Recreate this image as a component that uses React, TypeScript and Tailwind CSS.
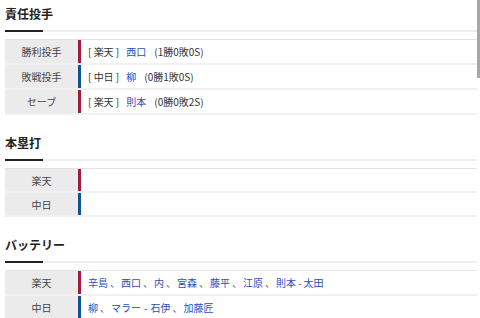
const RED = 'bg-[#a31a3c]';
const BLUE = 'bg-[#12509b]';

type Row = {
  label: string;
  team: 'red' | 'blue';
  content?: React.ReactNode;
};

function Name({ children }: { children: React.ReactNode }) {
  return <span className="text-[#1f4fbf]">{children}</span>;
}

function Sep() {
  return <span className="text-[#555] ml-[2px] mr-[1px]">、</span>;
}

function Heading({ title, first }: { title: string; first?: boolean }) {
  return (
    <div className={first ? '' : 'mt-[14px]'}>
      <h2 className="text-[12px] font-bold leading-[16px] text-[#222] pt-[6px] pb-[8px]">{title}</h2>
      <div className="flex h-[2px]">
        <div className="w-[38px] bg-[#222]" />
        <div className="flex-1 bg-[#eeeeee]" />
      </div>
    </div>
  );
}

function Table({ rows }: { rows: Row[] }) {
  return (
    <div className="mt-[7px] border-t border-[#e3e3e3]">
      {rows.map((r, i) => (
        <div key={i} className={`flex border-b-2 border-[#f1f1f1] ${r.content ? 'h-[25px]' : 'h-[24px]'}`}>
          <div className="w-[73px] bg-[#ebebeb] flex items-center justify-center text-[10px] text-[#444]">
            {r.label}
          </div>
          <div className={`w-[3px] ${r.team === 'red' ? RED : BLUE}`} />
          <div className="flex-1 flex items-center pl-[7px] text-[10px] text-[#333] whitespace-nowrap">
            {r.content}
          </div>
        </div>
      ))}
    </div>
  );
}

function Pitcher({ team, name, record }: { team: string; name: string; record: string }) {
  return (
    <>
      <span className="mr-[7px]">[ {team} ]</span>
      <Name>{name}</Name>
      <span className="ml-[8px]">{record}</span>
    </>
  );
}

export default function App() {
  const pitchers: Row[] = [
    { label: '勝利投手', team: 'red', content: <Pitcher team="楽天" name="西口" record="(1勝0敗0S)" /> },
    { label: '敗戦投手', team: 'blue', content: <Pitcher team="中日" name="柳" record="(0勝1敗0S)" /> },
    { label: 'セーブ', team: 'red', content: <Pitcher team="楽天" name="則本" record="(0勝0敗2S)" /> },
  ];

  const homers: Row[] = [
    { label: '楽天', team: 'red' },
    { label: '中日', team: 'blue' },
  ];

  const battery: Row[] = [
    {
      label: '楽天',
      team: 'red',
      content: (
        <>
          <Name>辛島</Name><Sep />
          <Name>西口</Name><Sep />
          <Name>内</Name><Sep />
          <Name>宮森</Name><Sep />
          <Name>藤平</Name><Sep />
          <Name>江原</Name><Sep />
          <Name>則本</Name>
          <span className="mx-[2px] text-[#555]">-</span>
          <Name>太田</Name>
        </>
      ),
    },
    {
      label: '中日',
      team: 'blue',
      content: (
        <>
          <Name>柳</Name><Sep />
          <Name>マラー</Name>
          <span className="mx-[3px] text-[#555]">-</span>
          <Name>石伊</Name><Sep />
          <Name>加藤匠</Name>
        </>
      ),
    },
  ];

  return (
    <div className="relative w-[480px] h-[318px] overflow-hidden bg-white font-['Noto_Sans_CJK_JP','Noto_Sans',sans-serif]">
      <div className="pl-[5px] pr-[3px]">
        <Heading title="責任投手" first />
        <Table rows={pitchers} />
        <Heading title="本塁打" />
        <Table rows={homers} />
        <Heading title="バッテリー" />
        <Table rows={battery} />
      </div>
      <div className="absolute right-0 top-0 w-[3px] h-[78px] bg-[#a8a8a8]" />
    </div>
  );
}
